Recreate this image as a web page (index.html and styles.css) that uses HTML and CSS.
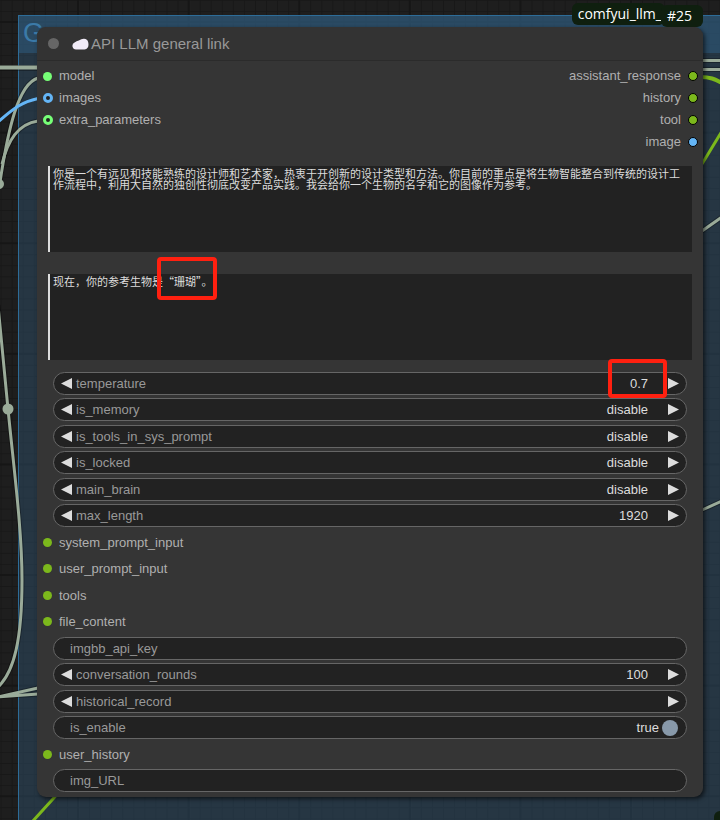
FILE: index.html
```
<!DOCTYPE html>
<html lang="en">
<head>
  <meta charset="UTF-8" />
  <meta name="viewport" content="width=device-width, initial-scale=1.0" />
  <title>API LLM general link</title>
  <link rel="stylesheet" href="styles.css">
</head>
<body>
  <div class="canvas">
    <svg class="backdrop" aria-hidden="true">
      <defs>
        <pattern id="minor" x="78" y="22" width="11.06" height="11.06" patternUnits="userSpaceOnUse">
          <path d="M0 .5H11.06M.5 0V11.06" stroke="#181818" fill="none" />
        </pattern>
        <pattern id="major" x="77" y="21" width="110.6" height="110.6" patternUnits="userSpaceOnUse">
          <path d="M0 1H110.6M1 0V110.6" stroke="#161616" stroke-width="2" fill="none" />
        </pattern>
      </defs>
      <rect width="100%" height="100%" fill="url(#minor)" />
      <rect width="100%" height="100%" fill="url(#major)" />
    </svg>

    <div class="group"><h2>G</h2></div>

    <svg class="links" aria-hidden="true">
      <g class="link shade">
        <path d="M-2 68H40" stroke-width="6" />
        <path d="M700 60.5H724M700 69.5H724" />
        <path d="M38 78C18 84 8 130 0 182" />
        <path d="M38 121C18 124 8 140 2 164" />
        <path d="M-2 305L8 409C14 470 22 530 22 580C22 640 14 672 -2 687" />
        <path d="M-2 697L38 688M-2 697L38 694" />
        <path d="M702 231L722 217M702 510L722 501" />
      </g>
      <g class="link">
        <path class="thick" d="M-2 67.5H40" />
        <path d="M700 60.5H724M700 69.5H724" />
        <path d="M38 78C18 84 8 130 0 182" />
        <path d="M38 121C18 124 8 140 2 164" />
        <path d="M-2 305L8 409C14 470 22 530 22 580C22 640 14 672 -2 687" />
        <path d="M-2 697L38 688M-2 697L38 694" />
        <path d="M702 231L722 217M702 510L722 501" />
      </g>
      <path class="link image" d="M38 98.500C22 102 14 108 -2 122" />
      <path class="link string thick" d="M700 77C710 77 715 79 722 83" />
      <path class="link string" d="M702 164L722 131M32 822L62 789" />
      <circle class="knot" cx="-1" cy="184" r="5" />
      <circle class="knot" cx="8" cy="409" r="5.500" />
    </svg>

    <main class="node">
      <div class="badges">
        <span class="badge pack">comfyui_llm_</span>
        <span class="badge number">#25</span>
      </div>

      <header class="title">
        <span class="collapse"></span>
        <svg class="cloud" viewBox="0 0 17 12" aria-hidden="true">
          <path d="M4 11.500A3.600 3.600 0 0 1 2.600 4.600Q4.500 2.600 6.800 2.400Q9.500 .6 12 .7A4.300 4.300 0 0 1 16.200 4.200Q17 8 15.600 9.800Q14.500 11.500 12.500 11.500Z" />
        </svg>
        <h1>API LLM general link</h1>
      </header>

      <div class="ports">
        <ul class="inputs">
          <li class="slot model"><i class="dot"></i>model</li>
          <li class="slot images"><i class="dot ring"></i>images</li>
          <li class="slot model"><i class="dot ring"></i>extra_parameters</li>
        </ul>
        <ul class="outputs">
          <li class="slot">assistant_response<i class="dot"></i></li>
          <li class="slot">history<i class="dot"></i></li>
          <li class="slot">tool<i class="dot"></i></li>
          <li class="slot images">image<i class="dot"></i></li>
        </ul>
      </div>

      <div class="prompts">
        <div class="prompt">
          <textarea aria-label="system_prompt" spellcheck="false">你是一个有远见和技能熟练的设计师和艺术家，热衷于开创新的设计类型和方法。你目前的重点是将生物智能整合到传统的设计工作流程中，利用大自然的独创性彻底改变产品实践。我会给你一个生物的名字和它的图像作为参考。</textarea>
        </div>
        <div class="prompt">
          <textarea aria-label="user_prompt" spellcheck="false">现在，你的参考生物是“珊瑚”。</textarea>
          <span class="mark mark-word"></span>
        </div>
      </div>

      <form class="widgets">
        <div class="widget">
          <button type="button" class="arrow prev" aria-label="Decrease"></button>
          <label for="temperature">temperature</label>
          <input id="temperature" type="text" inputmode="decimal" value="0.7">
          <button type="button" class="arrow next" aria-label="Increase"></button>
          <span class="mark mark-value"></span>
        </div>
        <div class="widget">
          <button type="button" class="arrow prev" aria-label="Previous"></button>
          <label for="is_memory">is_memory</label>
          <select id="is_memory"><option>disable</option><option>enable</option></select>
          <button type="button" class="arrow next" aria-label="Next"></button>
        </div>
        <div class="widget">
          <button type="button" class="arrow prev" aria-label="Previous"></button>
          <label for="is_tools">is_tools_in_sys_prompt</label>
          <select id="is_tools"><option>disable</option><option>enable</option></select>
          <button type="button" class="arrow next" aria-label="Next"></button>
        </div>
        <div class="widget">
          <button type="button" class="arrow prev" aria-label="Previous"></button>
          <label for="is_locked">is_locked</label>
          <select id="is_locked"><option>disable</option><option>enable</option></select>
          <button type="button" class="arrow next" aria-label="Next"></button>
        </div>
        <div class="widget">
          <button type="button" class="arrow prev" aria-label="Previous"></button>
          <label for="main_brain">main_brain</label>
          <select id="main_brain"><option>disable</option><option>enable</option></select>
          <button type="button" class="arrow next" aria-label="Next"></button>
        </div>
        <div class="widget">
          <button type="button" class="arrow prev" aria-label="Decrease"></button>
          <label for="max_length">max_length</label>
          <input id="max_length" type="text" inputmode="numeric" value="1920">
          <button type="button" class="arrow next" aria-label="Increase"></button>
        </div>
        <div class="slot"><i class="dot"></i>system_prompt_input</div>
        <div class="slot"><i class="dot"></i>user_prompt_input</div>
        <div class="slot"><i class="dot"></i>tools</div>
        <div class="slot"><i class="dot"></i>file_content</div>
        <div class="widget plain">
          <label for="imgbb_api_key">imgbb_api_key</label>
          <input id="imgbb_api_key" type="text">
        </div>
        <div class="widget">
          <button type="button" class="arrow prev" aria-label="Decrease"></button>
          <label for="conversation_rounds">conversation_rounds</label>
          <input id="conversation_rounds" type="text" inputmode="numeric" value="100">
          <button type="button" class="arrow next" aria-label="Increase"></button>
        </div>
        <div class="widget">
          <button type="button" class="arrow prev" aria-label="Previous"></button>
          <label for="historical_record">historical_record</label>
          <select id="historical_record"><option></option></select>
          <button type="button" class="arrow next" aria-label="Next"></button>
        </div>
        <div class="widget plain">
          <label for="is_enable">is_enable</label>
          <output class="state" for="is_enable">true</output>
          <input id="is_enable" class="toggle" type="checkbox" checked>
        </div>
        <div class="slot"><i class="dot"></i>user_history</div>
        <div class="widget plain">
          <label for="img_URL">img_URL</label>
          <input id="img_URL" type="text">
        </div>
      </form>
    </main>

    <span class="badge corner"></span>
  </div>
</body>
</html>
```

FILE: styles.css
```
* {
  box-sizing: border-box;
}
body {
  margin: 0;
  background: #1e1e1e;
  color: #b0b0b0;
  font: 13px/22px "Liberation Sans", Arial, sans-serif;
}
ul, h1, h2 {
  margin: 0;
  padding: 0;
  list-style: none;
  font-weight: normal;
}

/* graph canvas */
.canvas {
  position: relative;
  min-height: 100vh;
  padding: 27px 17px 24px 37px;
  overflow: hidden;
}
.backdrop, .links {
  position: absolute;
  inset: 0;
  width: 100%;
  height: 100%;
}
.group {
  position: absolute;
  inset: 15px -2px -2px 18px;
  border: 1px solid #2d6c98;
  background: rgba(48, 84, 114, 0.45);
}
.group h2 {
  height: 37px;
  padding-left: 4px;
  background: rgba(51, 105, 148, 0.4);
  color: #3b7aa8;
  font-size: 27px;
  line-height: 34px;
}
.link {
  fill: none;
  stroke: #9aab99;
  stroke-width: 3;
}
.link.shade {
  stroke: rgba(0, 0, 0, 0.3);
  stroke-width: 5;
}
.link.image {
  stroke: #64b5f6;
}
.link.string {
  stroke: #7cb81c;
}
.links .thick {
  stroke-width: 4;
}
.knot {
  fill: #9aab99;
}

/* node */
.node {
  position: relative;
  padding-bottom: 1px;
  border-radius: 9px;
  background: #353535;
  box-shadow: 2px 2px 4px rgba(0, 0, 0, 0.6);
}
.title {
  display: flex;
  align-items: center;
  height: 34px;
  padding-left: 11px;
  border-bottom: 1px solid #2b2b2b;
  border-radius: 9px 9px 0 0;
  background: #333;
}
.title h1 {
  margin-left: 2px;
  color: #999;
  font-size: 15px;
}
.collapse {
  width: 11px;
  height: 11px;
  border-radius: 50%;
  background: #666;
}
.cloud {
  width: 17px;
  height: 12px;
  margin-left: 13px;
  fill: #f1ebf7;
}
.badges {
  position: absolute;
  top: -24px;
  right: 0;
  display: flex;
}
.badge {
  height: 22px;
  padding: 0 11px 0 6px;
  border-radius: 6px;
  background: #0f1f0f;
  color: #fff;
  font: 14px/21px "Open Sans", "Noto Sans", sans-serif;
}
.badge.pack {
  padding-right: 3px;
}
.badge.number {
  margin: 2px 0 0 -4px;
}
.badge.corner {
  position: absolute;
  right: -11px;
  bottom: -12px;
}

/* slots */
.ports {
  display: flex;
  justify-content: space-between;
  padding: 4px 5px 0 6px;
}
.slot {
  display: flex;
  align-items: center;
  gap: 7px;
  height: 23px;
  line-height: 26px;
}
.ports .slot {
  height: 22px;
}
.outputs .slot {
  justify-content: flex-end;
}
.dot {
  width: 9px;
  height: 9px;
  border-radius: 50%;
  background: #7cb81c;
}
.outputs .dot {
  width: 10px;
  height: 10px;
  border: 1px solid #000;
}
.model .dot {
  background: #7f7;
}
.images .dot {
  background: #64b5f6;
}
.inputs .ring {
  width: 10px;
  height: 10px;
  margin-right: -1px;
  border: 3px solid #64b5f6;
  background: #222;
}
.model .ring {
  border-color: #7f7;
}

/* prompt boxes */
.prompts {
  display: grid;
  gap: 22px;
  padding: 13px 11px 12px;
}
.prompt {
  position: relative;
  display: flex;
}
.prompt textarea {
  flex: 1;
  height: 86px;
  margin: 0;
  padding: 2px 8px 2px 3px;
  border: 0;
  border-left: 2px solid #ddd;
  outline: 0;
  background: #222;
  color: #ddd;
  font: 11px/11px "Noto Sans CJK SC", sans-serif;
  resize: none;
}

/* widgets */
.widgets {
  display: grid;
  grid-auto-rows: 26px 27px;
  align-items: start;
}
.widgets > .slot {
  margin-left: 6px;
}
.widget {
  position: relative;
  display: flex;
  align-items: center;
  height: 23px;
  margin: 0 16px;
  padding: 0 7px;
  border: 1px solid #666;
  border-radius: 12px;
  background: #222;
}
.widget label {
  margin-left: 4px;
  color: #999;
}
.widget.plain label {
  margin-left: 9px;
}
.widget input,
.widget select {
  flex: 1;
  min-width: 0;
  height: 21px;
  margin: 0 20px 0 0;
  padding: 0;
  border: 0;
  outline: 0;
  appearance: none;
  background: none;
  color: #ddd;
  font: inherit;
  text-align: right;
  text-align-last: right;
}
.arrow {
  width: 11px;
  height: 11px;
  padding: 0;
  border: 0;
  background: #ddd;
}
.prev {
  clip-path: polygon(100% 0, 100% 100%, 0 50%);
}
.next {
  clip-path: polygon(0 0, 0 100%, 100% 50%);
}
.state {
  margin: 0 3px 0 auto;
  color: #ddd;
}
.widget .toggle {
  flex: none;
  width: 16px;
  height: 16px;
  margin: 0 1px 0 0;
  border-radius: 50%;
  background: #333;
}
.widget .toggle:checked {
  background: #89a;
}

/* red highlight frames */
.mark {
  position: absolute;
  border: 4px solid #ff2010;
  border-radius: 4px;
  pointer-events: none;
}
.mark-word {
  top: -17px;
  left: 109px;
  width: 60px;
  height: 43px;
}
.mark-value {
  top: -14px;
  right: 19px;
  width: 59px;
  height: 39px;
}
```
